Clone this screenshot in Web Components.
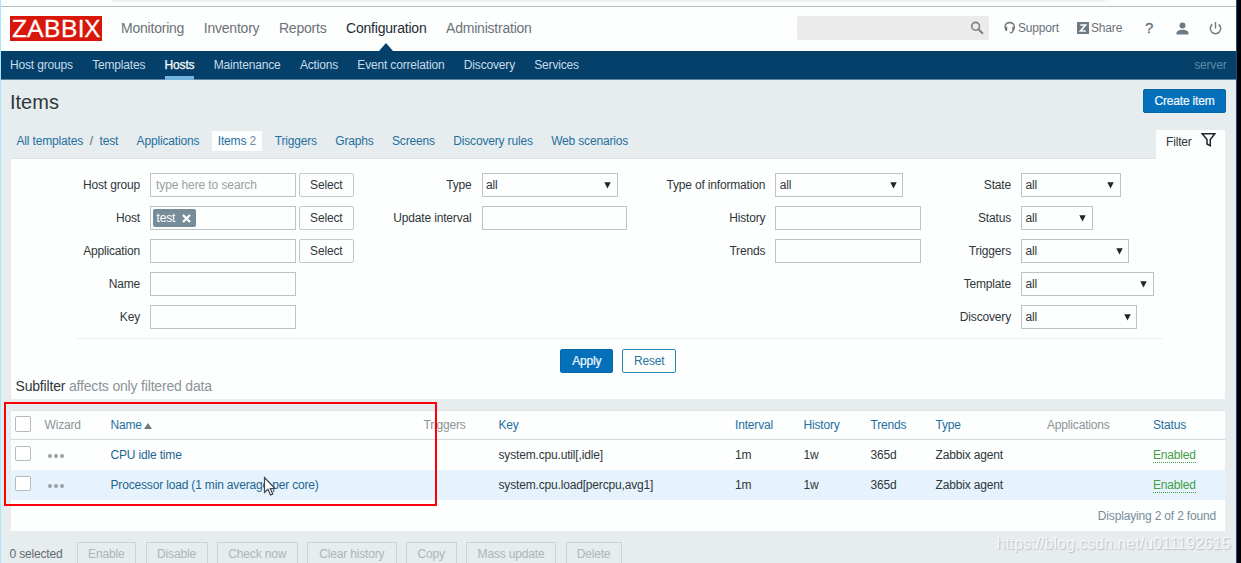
<!DOCTYPE html>
<html lang="en">
<head>
<meta charset="utf-8">
<title>Configuration of items</title>
<style>
    html, body {
        margin: 0;
        height: 100%;
        overflow: hidden;
    }

    body {
        font-family: "Liberation Sans", Arial, sans-serif;
        font-size: 12px;
        letter-spacing: -.17px;
        line-height: 14px;
        color: #2f373b;
    }
</style>
</head>
<body>
<items-page></items-page>

<script>
function define(name, html, setup) {
    customElements.define(name, class extends HTMLElement {
        constructor() {
            super();
            this.attachShadow({ mode: 'open' });
        }

        connectedCallback() {
            this.shadowRoot.innerHTML = html;
            if (setup) {
                setup(this, this.shadowRoot);
            }
        }
    });
}

// Main menu
define('main-header', `
    <style>
        :host {
            display: flex;
            align-items: center;
            box-sizing: border-box;
            height: 44px;
            padding: 0 15.5px 2px 9.5px;
            background: #fdfefe;
            color: #6b7277;
        }
        .logo {
            width: 92px;
            height: 25px;
            margin-right: 19.5px;
            overflow: visible;
        }
        .logo text {
            font-family: "Open Sans", sans-serif;
            font-size: 24.5px;
            letter-spacing: 0;
            fill: #fff;
            stroke: #fff;
            stroke-width: .3px;
        }
        nav {
            display: flex;
            gap: 19.6px;
            flex: 1;
            font-size: 14px;
            letter-spacing: -.22px;
        }
        nav span {
            position: relative;
        }
        .active {
            color: #1f2c33;
        }
        .active::after {
            content: "";
            position: absolute;
            left: 50%;
            top: 22px;
            margin-left: -7px;
            border: 7px solid transparent;
            border-top: 0;
            border-bottom: 8px solid #04406a;
        }
        .search {
            display: flex;
            align-items: center;
            justify-content: flex-end;
            box-sizing: border-box;
            width: 192px;
            height: 24px;
            padding-right: 5px;
            background: #ebebeb;
            border-radius: 2px;
        }
        .tools {
            display: flex;
            align-items: center;
        }
        svg {
            display: block;
        }
        .support {
            width: 41px;
        }
        .share {
            width: 31px;
        }
        .q {
            font-size: 15px;
            -webkit-text-stroke: .3px #6b7277;
            width: 8px;
            margin: 0 22.5px 0 23px;
        }
    </style>
    <svg class="logo" viewBox="0 0 92 25"><path d="M0 0h92v25H0z" fill="#d9160a"/><text x="2" y="21.3" textLength="88" lengthAdjust="spacingAndGlyphs">ZABBIX</text></svg>
    <nav>
        <span>Monitoring</span>
        <span>Inventory</span>
        <span>Reports</span>
        <span class="active">Configuration</span>
        <span>Administration</span>
    </nav>
    <div class="search">
        <svg width="14" height="14" viewBox="0 0 14 14" fill="none" stroke="#7a7f82" stroke-width="1.6"><circle cx="5.6" cy="5.3" r="3.9"/><path d="M8.4 8.2 13 12.8" stroke-width="2"/></svg>
    </div>
    <div class="tools">
        <svg width="12" height="14" viewBox="0 0 12 14" style="margin:0 2.5px 0 14.5px" fill="none" stroke="#71797d" stroke-width="1.3"><path d="M2.4 9.3C.2 6.8.4 1.6 5.7 1.5c5.3.1 5.5 5.3 3.5 7.8M9 9.5c-.2 1.9-1.2 2.3-3 2.3"/><path d="M2.3 5.8v4M9.2 5.8v4" stroke-width="1.9"/></svg>
        <span class="support">Support</span>
        <svg width="12" height="12" viewBox="0 0 12 12" style="margin:0 2px 0 18px"><path fill="#6c7b83" d="M0 0h12v12H0z"/><path d="M3.3 3h5.2l-5 6h5.3" fill="none" stroke="#fff" stroke-width="1.7"/></svg>
        <span class="share">Share</span>
        <span class="q">?</span>
        <svg width="13" height="13" viewBox="0 0 13 13" style="margin-right:20px" fill="#6c7b83"><circle cx="6.5" cy="3.5" r="3"/><path d="M.5 12.5V11c0-2 2.5-3.3 6-3.3s6 1.3 6 3.3v1.5z"/></svg>
        <svg width="13" height="13" viewBox="0 0 13 13" fill="none" stroke="#71797d" stroke-width="1.4"><path d="M3.3 2.4A5.2 5.2 0 1 0 9.7 2.4M6.5 0v6.5"/></svg>
    </div>
`);

// Second level menu, the server name stands on the right
define('sub-nav', `
    <style>
        :host {
            display: flex;
            box-sizing: border-box;
            height: 29px;
            padding: 0 10.5px 0 10px;
            background: #04406a;
            border-bottom: 1px solid #5f88a0;
            color: #c6dceb;
        }
        nav {
            display: flex;
            gap: 19.3px;
            flex: 1;
        }
        nav span {
            box-sizing: border-box;
            height: 29px;
            padding-top: 7px;
        }
        .active {
            color: #fff;
            -webkit-text-stroke: .25px #fff;
            border-bottom: 4px solid #74b5e2;
        }
        .server {
            padding-top: 7px;
            color: #5f8ca8;
        }
    </style>
    <nav>
        <span>Host groups</span>
        <span>Templates</span>
        <span class="active">Hosts</span>
        <span>Maintenance</span>
        <span>Actions</span>
        <span>Event correlation</span>
        <span>Discovery</span>
        <span>Services</span>
    </nav>
    <span class="server">server</span>
`);

// kind: default is outlined grey, "primary", "alt" and "disabled" change the colours
define('z-button', `
    <style>
        :host {
            display: flex;
            align-items: center;
            justify-content: center;
            box-sizing: border-box;
            height: 24px;
            border: 1px solid #c3cacd;
            border-radius: 2px;
            background: #fdfefe;
            color: #2f373b;
        }
        :host([kind="primary"]) {
            background: #0470b9;
            border-color: #0467a8;
            color: #f2f9ff;
            -webkit-text-stroke: .2px #f2f9ff;
        }
        :host([kind="alt"]) {
            border-color: #2f86b4;
            color: #2a759f;
        }
        :host([kind="disabled"]) {
            background: transparent;
            border-color: #cdd4d6;
            border-radius: 0;
            color: #adb6b9;
        }
    </style>
    <slot></slot>
`, (el) => {
    el.style.width = el.getAttribute('width') + 'px';
});

define('page-title', `
    <style>
        :host {
            display: flex;
            justify-content: space-between;
            align-items: center;
            height: 42px;
            padding: 0 11px 0 10px;
        }
        h1 {
            margin: 1px 0 0;
            font-size: 20px;
            letter-spacing: 0;
            line-height: 24px;
            font-weight: normal;
        }
    </style>
    <h1><slot></slot></h1>
    <z-button kind="primary" width="83">Create item</z-button>
`);

define('host-tabs', `
    <style>
        :host {
            display: flex;
            align-items: flex-start;
            box-sizing: border-box;
            height: 36px;
            padding: 8px 12px 0 16.5px;
            color: #1f70a0;
        }
        span {
            padding-top: 4px;
        }
        .sep {
            margin: 0 6.7px;
            color: #5d686e;
        }
        .tab {
            margin-left: 18.4px;
        }
        .current {
            box-sizing: border-box;
            width: 50.5px;
            height: 20px;
            margin: 1px -6px 0 12.5px;
            padding: 3px 0 0 6px;
            background: #fdfefe;
        }
        i {
            font-style: normal;
            color: #768d99;
        }
        .filter {
            display: flex;
            box-sizing: border-box;
            width: 69px;
            height: 29px;
            margin-left: auto;
            padding: 5px 0 0 10px;
            background: #fdfefe;
            color: #2f373b;
        }
        .filter svg {
            margin: -3px 0 0 9px;
        }
    </style>
    <span>All templates</span><span class="sep">/</span><span>test</span>
    <span class="tab">Applications</span>
    <span class="current">Items <i>2</i></span>
    <span class="tab">Triggers</span>
    <span class="tab">Graphs</span>
    <span class="tab">Screens</span>
    <span class="tab">Discovery rules</span>
    <span class="tab">Web scenarios</span>
    <div class="filter">Filter
        <svg width="15" height="16" viewBox="0 0 15 16" fill="none" stroke="#1d262b" stroke-width="1.5"><path d="M1.2 1.8h12.6L9.3 7.5v6.3L6 12V7.5z"/></svg>
    </div>
`);

define('form-row', `
    <style>
        :host {
            display: flex;
            align-items: center;
            height: 24px;
            margin-bottom: 9px;
        }
        label {
            flex: none;
            width: var(--label-width);
            margin-right: 10px;
            text-align: right;
        }
        div {
            display: flex;
            gap: 3px;
        }
    </style>
    <label></label>
    <div><slot></slot></div>
`, (el, root) => {
    root.querySelector('label').textContent = el.getAttribute('label');
});

define('text-box', `
    <style>
        :host {
            display: flex;
            align-items: center;
            box-sizing: border-box;
            width: 145.5px;
            height: 24px;
            padding: 0 2px;
            border: 1px solid #bcc4c6;
            background: #fdfefe;
        }
        .hint {
            padding-left: 3px;
            letter-spacing: -.1px;
            color: #999fa2;
        }
        .chip {
            display: flex;
            align-items: center;
            gap: 7px;
            height: 18px;
            padding: 0 5px 0 3.5px;
            border-radius: 2px;
            background: #768d99;
            color: #fff;
        }
    </style>
`, (el, root) => {
    if (el.hasAttribute('hint')) {
        root.innerHTML += `<span class="hint">${el.getAttribute('hint')}</span>`;
    }
    if (el.hasAttribute('chip')) {
        root.innerHTML += `<span class="chip">${el.getAttribute('chip')}
            <svg width="9" height="9" viewBox="0 0 9 9" stroke="#fff" stroke-width="2.3"><path d="M1 1l7 7M8 1 1 8"/></svg></span>`;
    }
});

define('drop-down', `
    <style>
        :host {
            display: flex;
            align-items: center;
            justify-content: space-between;
            box-sizing: border-box;
            height: 24px;
            padding: 0 5.5px 0 3.5px;
            border: 1px solid #bcc4c6;
            background: #fdfefe;
        }
    </style>
    <slot></slot>
    <svg width="7" height="7" viewBox="0 0 7 7"><path d="M.3.3h6.4L3.5 6.5z" fill="#1d262b"/></svg>
`, (el) => {
    el.style.width = el.getAttribute('width') + 'px';
});

define('filter-panel', `
    <style>
        :host {
            display: block;
            box-sizing: border-box;
            height: 241px;
            margin: 0 12px 0 11px;
            padding-top: 14px;
            border-top: 1px solid #dde3e5;
            background: #fdfefe;
        }
        .columns {
            display: grid;
            grid-template-columns: 344px 290px 276px 1fr;
            height: 165px;
        }
        .buttons {
            display: flex;
            justify-content: center;
            gap: 9px;
            margin: 0 62.5px 0 65px;
            padding: 9.5px 2px 0 0;
            border-top: 1px solid #eef1f2;
        }
        .sub {
            margin: 5px 0 0 4.5px;
            font-size: 14px;
            letter-spacing: -.18px;
            line-height: 16px;
            color: #8b9498;
        }
        b {
            font-weight: normal;
            color: #2f373b;
        }
    </style>
    <div class="columns">
        <div style="--label-width:129px">
            <form-row label="Host group"><text-box hint="type here to search"></text-box><z-button width="55.5">Select</z-button></form-row>
            <form-row label="Host"><text-box chip="test"></text-box><z-button width="55.5">Select</z-button></form-row>
            <form-row label="Application"><text-box></text-box><z-button width="55.5">Select</z-button></form-row>
            <form-row label="Name"><text-box></text-box></form-row>
            <form-row label="Key"><text-box></text-box></form-row>
        </div>
        <div style="--label-width:116.5px">
            <form-row label="Type"><drop-down width="136">all</drop-down></form-row>
            <form-row label="Update interval"><text-box></text-box></form-row>
        </div>
        <div style="--label-width:120.3px">
            <form-row label="Type of information"><drop-down width="128">all</drop-down></form-row>
            <form-row label="History"><text-box></text-box></form-row>
            <form-row label="Trends"><text-box></text-box></form-row>
        </div>
        <div style="--label-width:90px">
            <form-row label="State"><drop-down width="99.5">all</drop-down></form-row>
            <form-row label="Status"><drop-down width="71.5">all</drop-down></form-row>
            <form-row label="Triggers"><drop-down width="108">all</drop-down></form-row>
            <form-row label="Template"><drop-down width="132.5">all</drop-down></form-row>
            <form-row label="Discovery"><drop-down width="116">all</drop-down></form-row>
        </div>
    </div>
    <div class="buttons">
        <z-button kind="primary" width="53">Apply</z-button>
        <z-button kind="alt" width="54">Reset</z-button>
    </div>
    <div class="sub"><b>Subfilter</b> affects only filtered data</div>
`);

const items = [
    { name: 'CPU idle time', key: 'system.cpu.util[,idle]' },
    { name: 'Processor load (1 min average per core)', key: 'system.cpu.load[percpu,avg1]', hover: true }
];

define('item-table', `
    <style>
        :host {
            display: block;
            box-sizing: border-box;
            height: 121px;
            margin: 11px 12px 0 11px;
            background: #fdfefe;
        }
        .row {
            display: grid;
            grid-template-columns: 33.5px 66px 313px 75px 236.5px 68.5px 67px 65px 111.5px 106px 1fr;
            align-items: center;
            box-sizing: border-box;
            height: 30px;
        }
        .head {
            height: 29.5px;
            border-top: 1px solid #dfe4e7;
            border-bottom: 1.5px solid #d5dbdd;
            color: #1f70a0;
        }
        .hover {
            background: #e6f3fc;
        }
        .grey {
            color: #8b9498;
        }
        .link {
            color: #1f6590;
        }
        .box {
            width: 13.5px;
            height: 13.5px;
            margin: -2px 0 0 4px;
            border: 1px solid #b3bcc0;
            border-radius: 2px;
            background: #fff;
        }
        .dots {
            display: flex;
            gap: 2px;
            margin: 3px 0 0 3.5px;
        }
        .dots i {
            width: 4px;
            height: 4px;
            border-radius: 50%;
            background: #98a1a5;
        }
        .on {
            justify-self: start;
            margin-top: 1px;
            border-bottom: 1px dotted #429e47;
            color: #429e47;
        }
        .total {
            padding: 9px 9px 0;
            text-align: right;
            color: #768d99;
        }
        .arrow {
            display: inline-block;
            margin-left: -1px;
            border: 4px solid transparent;
            border-top: 0;
            border-bottom: 6px solid #71797d;
        }
    </style>
    <div class="row head">
        <span class="box"></span>
        <span class="grey">Wizard</span>
        <span>Name <i class="arrow"></i></span>
        <span class="grey">Triggers</span>
        <span>Key</span>
        <span>Interval</span>
        <span>History</span>
        <span>Trends</span>
        <span>Type</span>
        <span class="grey">Applications</span>
        <span>Status</span>
    </div>
    <div class="rows"></div>
    <div class="total">Displaying 2 of 2 found</div>
`, (el, root) => {
    root.querySelector('.rows').innerHTML = items.map((item) => `
        <div class="row ${item.hover ? 'hover' : ''}">
            <span class="box"></span>
            <span class="dots"><i></i><i></i><i></i></span>
            <span class="link">${item.name}</span>
            <span></span>
            <span>${item.key}</span>
            <span>1m</span>
            <span>1w</span>
            <span>365d</span>
            <span>Zabbix agent</span>
            <span></span>
            <span class="on">Enabled</span>
        </div>
    `).join('');
});

define('action-bar', `
    <style>
        :host {
            display: flex;
            align-items: center;
            gap: 9.5px;
            margin: 11px 0 0 9.5px;
        }
        .count {
            width: 57.5px;
            color: #5f6b71;
        }
    </style>
    <span class="count">0 selected</span>
    <z-button kind="disabled" width="59.5">Enable</z-button>
    <z-button kind="disabled" width="62">Disable</z-button>
    <z-button kind="disabled" width="80.5">Check now</z-button>
    <z-button kind="disabled" width="89.5">Clear history</z-button>
    <z-button kind="disabled" width="50.5">Copy</z-button>
    <z-button kind="disabled" width="90">Mass update</z-button>
    <z-button kind="disabled" width="56">Delete</z-button>
`);

define('items-page', `
    <style>
        :host {
            display: block;
            position: relative;
            box-sizing: border-box;
            height: 563px;
            overflow: hidden;
            background: #e7ecee;
            border-right: 4px solid #000;
        }
        .chrome {
            box-sizing: border-box;
            height: 7px;
            background: #fbfcfc;
            border-bottom: 1px solid #b9bdbd;
        }
        .chrome div {
            width: 993px;
            height: 2px;
            margin-left: 112px;
            background: #eeefef;
        }
        .edge {
            position: absolute;
            top: 0;
            bottom: 0;
            left: 0;
            width: 1px;
            background: #a9e7f8;
        }
        .edge.right {
            left: auto;
            right: 0;
            background: #1c4f8e;
        }
        .mark {
            position: absolute;
            left: 4px;
            top: 402px;
            width: 429px;
            height: 100px;
            border: 2px solid #fb0007;
        }
        .cursor {
            position: absolute;
            left: 263px;
            top: 476px;
        }
        .watermark {
            position: absolute;
            left: 996.5px;
            top: 534px;
            font-size: 16px;
            line-height: 20px;
            letter-spacing: 0;
            color: rgba(255, 255, 255, .75);
            text-shadow: 1px 1px 1px rgba(120, 130, 135, .4);
        }
    </style>
    <div class="chrome"><div></div></div>
    <main-header></main-header>
    <sub-nav></sub-nav>
    <page-title>Items</page-title>
    <host-tabs></host-tabs>
    <filter-panel></filter-panel>
    <item-table></item-table>
    <action-bar></action-bar>
    <div class="edge"></div>
    <div class="edge right"></div>
    <div class="mark"></div>
    <svg class="cursor" width="14" height="21" viewBox="0 0 14 21"><path d="M1.5 1.5v15L5 13.3 7.5 19l2.3-1-2.5-5.500H12z" fill="#fff" stroke="#3c464c" stroke-width="1.2"/></svg>
    <div class="watermark">https://blog.csdn.net/u011192615</div>
`);
</script>
</body>
</html>
